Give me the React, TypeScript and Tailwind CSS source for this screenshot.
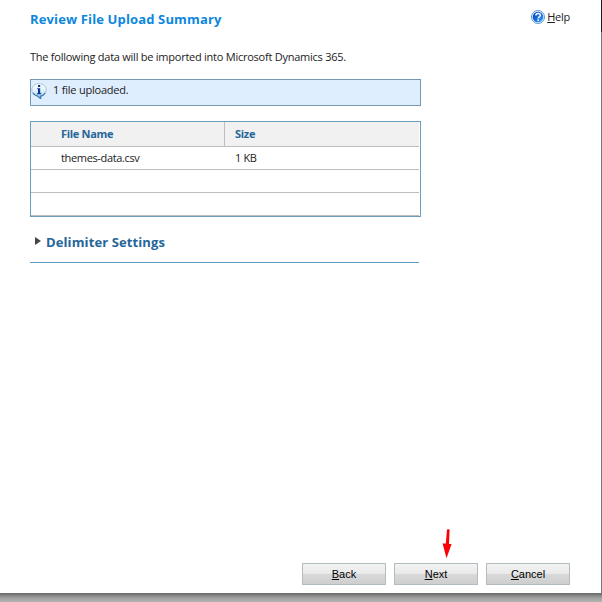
import type { ReactNode } from "react";

function InfoIcon() {
  return (
    <svg width="16" height="16" viewBox="0 0 16 16" className="shrink-0">
      <defs>
        <linearGradient id="info" x1="0" y1="0" x2="0" y2="1">
          <stop offset="0" stopColor="#ffffff" />
          <stop offset="0.5" stopColor="#e0f0fb" />
          <stop offset="1" stopColor="#7fb8e6" />
        </linearGradient>
      </defs>
      <path d="M8 .6C3.800.6.8 3.300.8 6.900c0 3.200 2.400 5.500 5.800 6.200L9.700 15.700V13.100c3.300-.6 5.500-3 5.500-6.200C15.200 3.300 12.200.6 8 .6Z" fill="url(#info)" stroke="#a3bccf" strokeWidth="0.900" />
      <path d="M2 10c1 1.700 2.600 2.700 4.600 3.100L9.700 15.700V13.100c2-.3 3.400-1.300 4.400-3.100" fill="none" stroke="#3a7bb3" strokeWidth="1.200" />
      <path d="M7 2h2.200v2H7zM6.200 5.200h3v5h1v1.100H6V10.200h1V6.300h-.8z" fill="#083a94" />
    </svg>
  );
}

function HelpIcon() {
  return (
    <svg width="14" height="14" viewBox="0 0 14 14" className="shrink-0">
      <defs>
        <linearGradient id="help" x1="0" y1="0" x2="1" y2="1">
          <stop offset="0" stopColor="#0646b8" />
          <stop offset="0.5" stopColor="#1268df" />
          <stop offset="1" stopColor="#46b0fa" />
        </linearGradient>
      </defs>
      <circle cx="7" cy="7" r="6.500" fill="#e7f3fd" stroke="#4f8fc8" strokeWidth="0.900" />
      <circle cx="7" cy="7" r="5.300" fill="url(#help)" />
      <path d="M4.900 5.600C4.900 4.200 5.800 3.500 7.100 3.500s2.200.7 2.200 1.800c0 1.500-2.100 1.500-2.100 3.200" fill="none" stroke="#fff" strokeWidth="1.500" />
      <rect x="6.400" y="9.400" width="1.600" height="1.600" fill="#fff" />
    </svg>
  );
}

function Button({ hotkey, children }: { hotkey: string; children: ReactNode }) {
  return (
    <button className="flex h-[22px] w-[84px] items-center justify-center border border-[#b3bdc1] bg-[linear-gradient(#f3f3f3_0%,#e9e9e9_50%,#d9d9d9_51%,#cecece_100%)] font-['Liberation_Sans',Arial,sans-serif] text-[11px] leading-[20px] text-black">
      <span>
        <span className="underline underline-offset-1">{hotkey}</span>
        {children}
      </span>
    </button>
  );
}

function Row({ name = "", size = "" }: { name?: string; size?: string }) {
  return (
    <div className="flex h-[23px] border-b border-[#bdbdbd] leading-[22px]">
      <div className="w-[194px] pl-[30px] tracking-[-0.350px]">{name}</div>
      <div className="pl-[10px] tracking-[-0.350px]">{size}</div>
    </div>
  );
}

export default function App() {
  return (
    <div className="h-[602px] w-[602px] overflow-hidden bg-[linear-gradient(#696969_0,#696969_593px,#a0a0a0_598px,#b2b2b2_602px)] font-['Open_Sans','Noto_Sans',sans-serif] text-[11px] text-[#222]">
      <div className="flex">
        <main className="flex h-[593px] w-[601px] flex-col bg-white pl-[30px]">
          <header className="flex h-[38px] justify-between pr-[31px]">
            <h1 className="pt-[10px] text-[13px] leading-[18px] font-bold tracking-[0.140px] text-[#0d87dd]">Review File Upload Summary</h1>
            <div className="mt-[10px] flex h-[14px] items-center gap-[2px]">
              <HelpIcon />
              <span className="tracking-[-0.250px]"><span className="underline underline-offset-1">H</span>elp</span>
            </div>
          </header>
          <p className="mt-[11px] h-[30px] leading-[16px] tracking-[-0.245px]">The following data will be imported into Microsoft Dynamics 365.</p>
          <div className="flex h-[27px] w-[391px] gap-[6px] border border-[#7399b3] bg-[#deeeff] pt-[3px]">
            <InfoIcon />
            <span className="leading-[14px] tracking-[-0.220px]">1 file uploaded.</span>
          </div>
          <div className="mt-[15px] h-[96px] w-[391px] border border-[#6b9ebb] pr-px">
            <div className="flex h-[25px] border-b border-[#bdbdbd] bg-[#f1f1f1] leading-[24px] font-bold tracking-[-0.300px] text-[#25669a]">
              <div className="w-[194px] border-r border-[#bdbdbd] pl-[30px]">File Name</div>
              <div className="pl-[10px]">Size</div>
            </div>
            <Row name="themes-data.csv" size="1 KB" />
            <Row />
            <Row />
          </div>
          <section className="flex h-[46px] w-[389px] border-b border-[#5d9bbd] pt-[16px] pl-[5px]">
            <svg width="6" height="8" viewBox="0 0 6 8" className="mt-[4px] mr-[5px]">
              <path d="M0 0L6 4L0 8Z" fill="#454545" />
            </svg>
            <h2 className="text-[13px] leading-[18px] font-bold tracking-[0.110px] text-[#25669a]">Delimiter Settings</h2>
          </section>
          <footer className="mt-auto pb-[8px]">
            <svg width="10" height="30" viewBox="0 0 10 30" className="mb-[4px] ml-[412px]">
              <path d="M5 .500Q6.500 0 7.600.5L7 15H9.600L4.500 29.300L.6 14.500H3.800Z" fill="#fb0007" />
            </svg>
            <div className="ml-[272px] flex gap-[8px]">
              <Button hotkey="B">ack</Button>
              <Button hotkey="N">ext</Button>
              <Button hotkey="C">ancel</Button>
            </div>
          </footer>
        </main>
        <div className="h-[593px] w-px bg-[linear-gradient(#202020_0,#202020_32px,#777777_32px,#777777_100%)]" />
      </div>
    </div>
  );
}
